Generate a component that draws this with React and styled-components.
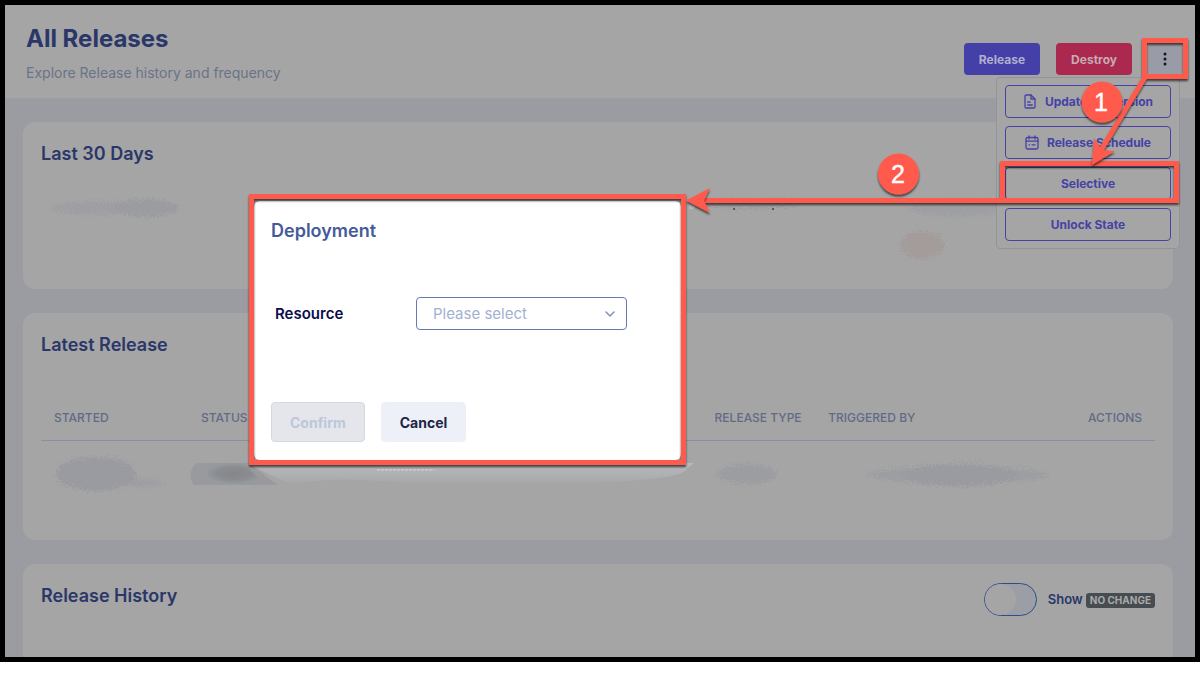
import React, { useState } from "react"
import styled, { createGlobalStyle } from "styled-components"

const GlobalStyle = createGlobalStyle`
    * {
        box-sizing: border-box;
    }

    body {
        margin: 0;
        background-color: #ffffff;
        font-family: Inter, "Liberation Sans", sans-serif;
    }

    button, select, input {
        font-family: inherit;
    }
`

const Frame = styled.div`
    position: relative;
    overflow: hidden;
    border: 5px solid #000000;
    background-color: #9a9ca1;
`

const Header = styled.header`
    display: flex;
    align-items: flex-end;
    justify-content: space-between;
    padding: 20px 13px 15px 21px;
    background-color: #a5a5a5;
`

const Title = styled.h1`
    margin: 0;
    font-size: 24px;
    line-height: 28px;
    font-weight: 700;
    color: #2a3768;
`

const Subtitle = styled.p`
    margin: 10px 0 0;
    font-size: 14px;
    line-height: 20px;
    color: #6a7389;
`

const Actions = styled.div`
    display: flex;
    gap: 16px;
    padding-bottom: 8px;
`

const ActionButton = styled.button`
    height: 32px;
    padding: 0 15px;
    border: none;
    border-radius: 4px;
    font-size: 12px;
    font-weight: 700;
    color: ${(props) => props.$color};
    background-color: ${(props) => props.$background};
`

const MenuAnchor = styled.div`
    position: relative;
`

const KebabButton = styled.button`
    display: flex;
    align-items: center;
    justify-content: center;
    width: 34px;
    height: 32px;
    padding: 0;
    border: none;
    border-radius: 4px;
    background-color: #999ca6;
`

const Menu = styled.div`
    position: absolute;
    z-index: 1;
    top: 34px;
    right: 2px;
    display: flex;
    flex-direction: column;
    gap: 8px;
    width: 184px;
    padding: 7px 8px;
    border: 1px solid #92949a;
    border-radius: 4px;
    background-color: #a5a5a5;
`

const MenuButton = styled.button`
    display: flex;
    align-items: center;
    justify-content: center;
    gap: 8px;
    height: 33px;
    padding: 0;
    border: 1px solid #4743a6;
    border-radius: 4px;
    background-color: transparent;
    font-size: 12px;
    font-weight: 700;
    color: #4642a5;
    white-space: nowrap;
`

const Main = styled.main`
    display: flex;
    flex-direction: column;
    gap: 24px;
    padding: 24px 22px 0 18px;
`

const Card = styled.section`
    padding: 18px;
    border-radius: ${(props) => (props.$last ? "12px 12px 0 0" : "12px")};
    background-color: #a5a5a5;
`

const CardHeader = styled.div`
    display: flex;
    justify-content: space-between;
`

const CardTitle = styled.h2`
    margin: 0;
    font-size: 18px;
    line-height: 28px;
    font-weight: 600;
    color: #2a3768;
`

const Stats = styled.div`
    display: flex;
    justify-content: space-between;
    padding: 28px 0 8px;
`

const Table = styled.table`
    width: 100%;
    margin-top: 35px;
    table-layout: fixed;
    border-collapse: collapse;
`

const HeadCell = styled.th`
    padding: 17px 13px 15px;
    border-bottom: 1px solid #8b8da2;
    text-align: ${(props) => props.$align || "left"};
    font-size: 12px;
    line-height: 14px;
    font-weight: 500;
    color: #616b85;
    white-space: nowrap;
`

const Cell = styled.td`
    height: 81px;
    padding: 8px 0;
    vertical-align: top;
`

const Smudge = styled.svg`
    display: block;
    overflow: visible;
`

const ToggleRow = styled.label`
    display: flex;
    align-items: center;
    height: 35px;
    margin-bottom: 22px;
`

const Toggle = styled.input`
    appearance: none;
    width: 53px;
    height: 33px;
    margin: 0 11px 0 0;
    border: 1px solid #2b4f88;
    border-radius: 17px;
    background-color: #9c9ea6;

    &::before {
        content: "";
        display: block;
        width: 31px;
        height: 31px;
        border-radius: 50%;
        background-color: #a5a5a5;
    }

    &:checked::before {
        margin-left: 20px;
    }
`

const ToggleText = styled.span`
    font-size: 13px;
    font-weight: 600;
    color: #2a3768;
`

const Tag = styled.span`
    margin: 2px 0 0 3px;
    padding: 0 4px;
    border-radius: 3px;
    background-color: #474c51;
    font-size: 10px;
    line-height: 15px;
    font-weight: 700;
    color: #a8a9aa;
`

const Dialog = styled.div`
    position: absolute;
    z-index: 2;
    top: 196px;
    right: 514px;
    width: 427px;
    padding: 17px 17px 18px;
    border-radius: 6px;
    background-color: #ffffff;
`

const DialogTitle = styled.h2`
    margin: 0;
    font-size: 18px;
    line-height: 26px;
    font-weight: 600;
    color: #455a99;
`

const Field = styled.div`
    display: flex;
    align-items: center;
    padding: 53px 4px 72px;
`

const FieldLabel = styled.label`
    width: 141px;
    font-size: 15px;
    font-weight: 600;
    color: #0b0c4d;
`

const SelectBox = styled.div`
    position: relative;
    width: 211px;
`

const Select = styled.select`
    appearance: none;
    display: block;
    width: 100%;
    height: 33px;
    padding: 0 32px 0 16px;
    border: 1px solid #667bb2;
    border-radius: 4px;
    background-color: #ffffff;
    font-size: 15px;
    color: #a3b1cf;
`

const Chevron = styled.svg`
    position: absolute;
    top: 12px;
    right: 12px;
    pointer-events: none;
`

const DialogButtons = styled.div`
    display: flex;
    gap: 16px;
`

const DialogButton = styled.button`
    height: 40px;
    padding: 0 18px;
    border: 1px solid ${(props) => props.$border};
    border-radius: 4px;
    background-color: ${(props) => props.$background};
    font-size: 14px;
    font-weight: 700;
    color: ${(props) => props.$color};
`

const Callouts = styled.svg`
    position: absolute;
    z-index: 3;
    top: -5px;
    right: -5px;
    pointer-events: none;
    font-family: "Liberation Sans", Arial, sans-serif;
`

const FileIcon = () => (
    <svg width="14" height="15" viewBox="0 0 14 15" fill="none" stroke="currentColor" strokeWidth="1.3" strokeLinecap="round" strokeLinejoin="round">
        <path d="M8 1H3.2C2.4 1 2 1.5 2 2.2V12.8C2 13.5 2.4 14 3.2 14H10.8C11.6 14 12 13.5 12 12.8V5Z" />
        <path d="M8 1V5H12" />
        <path d="M4.8 8H7M4.8 11H9.2" />
    </svg>
)

const CalendarIcon = () => (
    <svg width="14" height="15" viewBox="0 0 14 15" fill="none" stroke="currentColor" strokeWidth="1.3" strokeLinecap="round" strokeLinejoin="round">
        <rect x="1" y="2.5" width="12" height="11.5" rx="1.4" />
        <path d="M4 0.8V4M10 0.8V4M1 6.2H13M4 9.8H4.6M7 9.8H10" />
    </svg>
)

const columns = [
    { name: "Started", label: "STARTED", width: "13.2%" },
    { name: "Status", label: "STATUS", width: "46.1%" },
    { name: "Type", label: "RELEASE TYPE", width: "10.2%" },
    { name: "Trigger", label: "TRIGGERED BY", width: "20%" },
    { name: "Actions", label: "ACTIONS", align: "right" },
]

const App = () => {
    const [showNoChange, setShowNoChange] = useState(false)
    const [resource, setResource] = useState("")

    const loadColumns = columns.map((column) => {
        return (
            <HeadCell key={column.name} scope="col" $align={column.align}>
                {column.label}
            </HeadCell>
        )
    })

    return (
        <>
            <GlobalStyle />
            <Frame>
                <Header>
                    <div>
                        <Title>All Releases</Title>
                        <Subtitle>Explore Release history and frequency</Subtitle>
                    </div>
                    <Actions>
                        <ActionButton $background="#4440a8" $color="#b3b0ce">Release</ActionButton>
                        <ActionButton $background="#ab284e" $color="#c6adb5">Destroy</ActionButton>
                        <MenuAnchor>
                            <KebabButton aria-label="More actions">
                                <svg width="4" height="14" viewBox="0 0 4 14" fill="#14162c">
                                    <circle cx="2" cy="2" r="1.5" />
                                    <circle cx="2" cy="7" r="1.5" />
                                    <circle cx="2" cy="12" r="1.5" />
                                </svg>
                            </KebabButton>
                            <Menu>
                                <MenuButton><FileIcon />Update TF Version</MenuButton>
                                <MenuButton><CalendarIcon />Release Schedule</MenuButton>
                                <MenuButton>Selective</MenuButton>
                                <MenuButton>Unlock State</MenuButton>
                            </Menu>
                        </MenuAnchor>
                    </Actions>
                </Header>

                <Main>
                    <Card>
                        <CardTitle>Last 30 Days</CardTitle>
                        <Stats>
                            <Smudge width="140" height="55" viewBox="0 0 140 55" aria-hidden="true">
                                <defs>
                                    <filter id="grain" x="-10%" y="-20%" width="120%" height="140%">
                                        <feTurbulence type="fractalNoise" baseFrequency="0.8" numOctaves="1" seed="3" />
                                        <feDisplacementMap in="SourceGraphic" scale="20" xChannelSelector="R" yChannelSelector="G" />
                                    </filter>
                                </defs>
                                <g filter="url(#grain)" fill="#9b9ca0">
                                    <ellipse cx="55" cy="12" rx="46" ry="7" fillOpacity="0.7" />
                                    <ellipse cx="105" cy="12" rx="33" ry="9" />
                                </g>
                            </Smudge>
                            <Smudge width="466" height="67" viewBox="0 0 466 67" aria-hidden="true">
                                <path d="M0 8H10L4 13H0Z" fill="#b6b7b9" />
                                <g filter="url(#grain)">
                                    <ellipse cx="60" cy="8" rx="52" ry="4" fill="#9b9ca0" />
                                    <ellipse cx="270" cy="12" rx="50" ry="8" fill="#9e9fa2" />
                                    <ellipse cx="233" cy="49" rx="22" ry="14" fill="#a49b9b" />
                                </g>
                                <path d="M44 13h2M83 13h2" stroke="#4f5977" strokeWidth="2" />
                            </Smudge>
                        </Stats>
                    </Card>

                    <Card>
                        <CardTitle>Latest Release</CardTitle>
                        <Table>
                            <colgroup>
                                {columns.map((column) => <col key={column.name} width={column.width} />)}
                            </colgroup>
                            <thead>
                                <tr>{loadColumns}</tr>
                            </thead>
                            <tbody>
                                <tr>
                                    <Cell>
                                        <Smudge width="124" height="48" viewBox="0 0 124 48" aria-hidden="true">
                                            <g filter="url(#grain)" fill="#999ba0">
                                                <ellipse cx="55" cy="25" rx="40" ry="17" />
                                                <ellipse cx="102" cy="34" rx="20" ry="5" fillOpacity="0.6" />
                                            </g>
                                        </Smudge>
                                    </Cell>
                                    <Cell>
                                        <Smudge width="510" height="48" viewBox="0 0 510 48" aria-hidden="true">
                                            <defs>
                                                <radialGradient id="stain">
                                                    <stop offset="0" stopColor="#858686" />
                                                    <stop offset="0.6" stopColor="#8a8d90" />
                                                    <stop offset="1" stopColor="#96999e" />
                                                </radialGradient>
                                                <linearGradient id="streak" x1="0" y1="0" x2="0" y2="1">
                                                    <stop offset="0" stopColor="#b7b8bb" />
                                                    <stop offset="0.6" stopColor="#aeafb1" />
                                                    <stop offset="1" stopColor="#a5a5a5" />
                                                </linearGradient>
                                            </defs>
                                            <path d="M60 14H506L494 24Q470 34 320 36H240Q150 26 104 35Q80 26 60 14Z" fill="url(#streak)" />
                                            <path d="M8 14H60L90 36H6Q-2 25 8 14Z" fill="#999a9e" />
                                            <path d="M24 14H54Q66 22 74 35H36Q8 29 24 14Z" fill="url(#stain)" />
                                            <path d="M189 21H246" stroke="#d3d6dc" strokeDasharray="3 1" />
                                        </Smudge>
                                    </Cell>
                                    <Cell>
                                        <Smudge width="100" height="48" viewBox="0 0 100 48" aria-hidden="true">
                                            <ellipse cx="45" cy="25" rx="30" ry="10" fill="#9c9da0" filter="url(#grain)" />
                                        </Smudge>
                                    </Cell>
                                    <Cell>
                                        <Smudge width="222" height="48" viewBox="0 0 222 48" aria-hidden="true">
                                            <g filter="url(#grain)" fill="#9a9ba0">
                                                <ellipse cx="143" cy="26" rx="92" ry="8" fillOpacity="0.7" />
                                                <ellipse cx="145" cy="26" rx="58" ry="11" />
                                            </g>
                                        </Smudge>
                                    </Cell>
                                    <Cell />
                                </tr>
                            </tbody>
                        </Table>
                    </Card>

                    <Card $last>
                        <CardHeader>
                            <CardTitle>Release History</CardTitle>
                            <ToggleRow>
                                <Toggle
                                    type="checkbox"
                                    checked={showNoChange}
                                    onChange={() => setShowNoChange(!showNoChange)}
                                />
                                <ToggleText>Show</ToggleText>
                                <Tag>NO CHANGE</Tag>
                            </ToggleRow>
                        </CardHeader>
                    </Card>
                </Main>

                <Dialog role="dialog" aria-labelledby="dialog-title">
                    <DialogTitle id="dialog-title">Deployment</DialogTitle>
                    <Field>
                        <FieldLabel htmlFor="resource">Resource</FieldLabel>
                        <SelectBox>
                            <Select id="resource" value={resource} onChange={(e) => setResource(e.target.value)}>
                                <option value="">Please select</option>
                            </Select>
                            <Chevron width="10" height="10" viewBox="0 0 10 10" fill="none" stroke="#8496bf" strokeWidth="1.6" strokeLinecap="round" strokeLinejoin="round">
                                <path d="M1 3L5 7L9 3" />
                            </Chevron>
                        </SelectBox>
                    </Field>
                    <DialogButtons>
                        <DialogButton disabled $background="#e4e6ec" $border="#d5d8e0" $color="#bcc7da">Confirm</DialogButton>
                        <DialogButton $background="#edf0f7" $border="#edf0f7" $color="#1e2547">Cancel</DialogButton>
                    </DialogButtons>
                </Dialog>

                {/* numbered steps */}
                <Callouts width="1200" height="662" viewBox="0 0 1200 662">
                    <defs>
                        <filter id="shadow" filterUnits="userSpaceOnUse" x="0" y="0" width="1200" height="662">
                            <feDropShadow dx="0" dy="2" stdDeviation="1" floodColor="#000000" floodOpacity="0.65" />
                        </filter>
                    </defs>
                    <g filter="url(#shadow)" fill="none" stroke="#ff5a4c" strokeWidth="5">
                        <rect x="1144.5" y="40.5" width="41" height="36" />
                        <rect x="1002.5" y="163.5" width="174" height="37" />
                        <rect x="251.5" y="196.5" width="432" height="266" />
                        <path d="M1001 200.5H704" />
                        <path d="M1145 77L1101 150" />
                    </g>
                    <g filter="url(#shadow)" fill="#ff5a4c">
                        <path d="M686 200.5L710 188L704 200.5L710 213Z" />
                        <path d="M1092 165L1094 138L1102 150L1115 151Z" />
                        <circle cx="1102" cy="102" r="20.5" />
                        <circle cx="898.5" cy="174" r="20.5" />
                    </g>
                    <g fill="#ffffff" stroke="#ffffff" strokeWidth="0.4" fontSize="25" textAnchor="middle">
                        <text x="1101" y="111">1</text>
                        <text x="898" y="183">2</text>
                    </g>
                </Callouts>
            </Frame>
        </>
    )
}

export default App
